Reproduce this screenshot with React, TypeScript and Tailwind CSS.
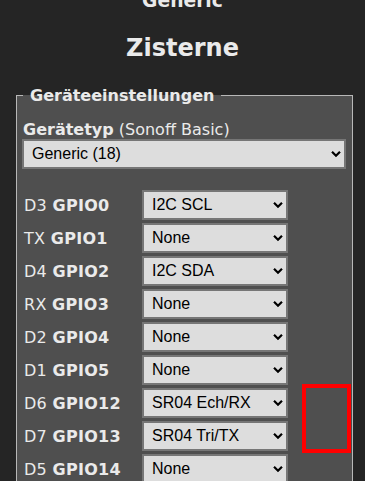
import { ChangeEvent, useState } from 'react';

type GpioRow = {
  pin: string;
  gpio: string;
  value: string;
};

const OPTIONS = ['None', 'I2C SCL', 'I2C SDA', 'SR04 Ech/RX', 'SR04 Tri/TX'];

const ROWS: GpioRow[] = [
  { pin: 'D3', gpio: 'GPIO0', value: 'I2C SCL' },
  { pin: 'TX', gpio: 'GPIO1', value: 'None' },
  { pin: 'D4', gpio: 'GPIO2', value: 'I2C SDA' },
  { pin: 'RX', gpio: 'GPIO3', value: 'None' },
  { pin: 'D2', gpio: 'GPIO4', value: 'None' },
  { pin: 'D1', gpio: 'GPIO5', value: 'None' },
  { pin: 'D6', gpio: 'GPIO12', value: 'SR04 Ech/RX' },
  { pin: 'D7', gpio: 'GPIO13', value: 'SR04 Tri/TX' },
  { pin: 'D5', gpio: 'GPIO14', value: 'None' },
];

function Chevron() {
  return (
    <svg
      className="pointer-events-none absolute right-[5px] top-1/2 -translate-y-1/2"
      width="10"
      height="7"
      viewBox="0 0 10 7"
      aria-hidden
    >
      <path d="M1 1.2 L5 5.2 L9 1.2" fill="none" stroke="#000" strokeWidth="2.2" />
    </svg>
  );
}

type SelectProps = {
  value: string;
  options: string[];
  onChange: (v: string) => void;
  className?: string;
};

function Select({ value, options, onChange, className = '' }: SelectProps) {
  return (
    <div className={`relative ${className}`}>
      <select
        value={value}
        onChange={(e: ChangeEvent<HTMLSelectElement>) => onChange(e.target.value)}
        className="block h-[30px] w-full appearance-none border-2 border-[#767676] bg-[#dddddd] pl-[8px] font-['Liberation_Sans',Arial,sans-serif] text-[16px] text-black outline-none"
      >
        {options.map((o) => (
          <option key={o} value={o}>
            {o}
          </option>
        ))}
      </select>
      <Chevron />
    </div>
  );
}

export default function App() {
  const [module, setModule] = useState('Generic (18)');
  const [values, setValues] = useState(ROWS.map((r) => r.value));

  return (
    <div className="relative h-[481px] w-[365px] overflow-hidden bg-[#252525] font-['DejaVu_Sans',Verdana,sans-serif] text-[16px] text-[#eaeaea]">
      <div className="mt-[-10px] text-center">
        <h3 className="text-[18.72px] font-bold leading-[22px]">Generic</h3>
        <h2 className="mt-[22px] text-[24px] font-bold leading-[28px]">Zisterne</h2>
      </div>

      <fieldset className="ml-[16px] mt-[24px] w-[337px] border border-[#b8b8b8] bg-[#4f4f4f] pb-[10px] pl-[5px] pr-[5px]">
        <legend className="ml-[1px] px-[7px] font-bold leading-[19px]">Geräteeinstellungen</legend>

        <p className="mt-[15px] pl-[1px] leading-[19px]">
          <b>Gerätetyp</b> (Sonoff Basic)
        </p>
        <Select
          value={module}
          options={['Generic (18)', 'Sonoff Basic (1)']}
          onChange={setModule}
          className="w-[324px]"
        />

        <div className="mt-[21px] flex flex-col gap-[3px]">
          {ROWS.map((r, i) => (
            <div key={r.gpio} className="flex items-center">
              <div className="w-[120px] pl-[2px] leading-[19px] tracking-[0.3px]">
                {r.pin} <b>{r.gpio}</b>
              </div>
              <Select
                value={values[i]}
                options={OPTIONS}
                onChange={(v) => setValues((prev) => prev.map((p, j) => (j === i ? v : p)))}
                className="w-[146px]"
              />
            </div>
          ))}
        </div>
      </fieldset>

      {/* highlight marker over the page */}
      <div className="absolute left-[302px] top-[384px] h-[69px] w-[49px] border-4 border-[#ff0000]" />
    </div>
  );
}
